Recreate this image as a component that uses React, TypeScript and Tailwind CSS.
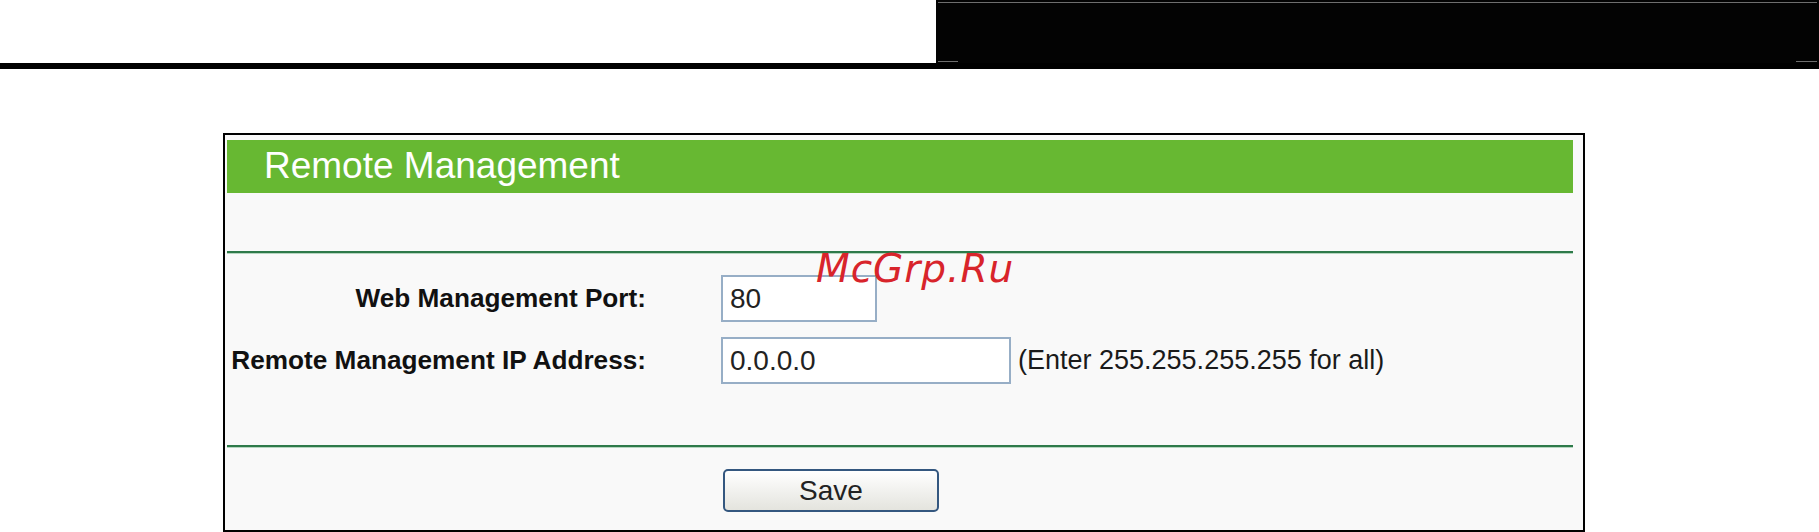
export default function App() {
  return (
    <div className="relative w-[1819px] h-[532px] overflow-hidden bg-white font-['Liberation_Sans',Arial,sans-serif] text-[#111]">
      {/* top banner */}
      <div className="flex h-[63px]">
        <div className="w-[936px]" />
        <div className="flex-1 bg-[#030303] pt-[2px] px-[2px] flex flex-col justify-between">
          <div className="h-px bg-[#6e6e6e]" />
          <div className="flex justify-between pb-[1px]">
            <div className="w-[20px] h-px bg-[#6e6e6e]" />
            <div className="w-[21px] h-px bg-[#6e6e6e]" />
          </div>
        </div>
      </div>
      <div className="h-[6px] bg-black" />

      {/* panel */}
      <div className="mt-[64px] ml-[223px] w-[1362px] h-[399px] border-2 border-black bg-[#f9f9f9] pt-[5px] pl-[2px] pr-[10px]">
        <div className="h-[53px] bg-[#67b832] flex items-center pl-[37px] pb-[3px]">
          <span className="text-[37px] leading-none text-white">Remote Management</span>
        </div>

        <div className="h-[58px]" />
        <div className="h-[3px] border-t-2 border-[#2e7a4a] bg-[#b6d6c0]" />

        <div className="pt-[21px] pb-[61px] flex flex-col gap-[15px]">
          <div className="flex items-center h-[47px]">
            <div className="w-[419px] shrink-0 flex justify-end">
              <span className="whitespace-nowrap text-[26.2px] font-bold leading-none">Web Management Port:</span>
            </div>
            <div className="ml-[75px] shrink-0 w-[156px] h-[47px] border-2 border-[#97aec6] bg-white flex items-center pl-[7px] text-[28px] text-[#222]">
              80
            </div>
          </div>
          <div className="flex items-center h-[47px]">
            <div className="w-[419px] shrink-0 flex justify-end">
              <span className="whitespace-nowrap text-[26.2px] font-bold leading-none">Remote Management IP Address:</span>
            </div>
            <div className="ml-[75px] shrink-0 w-[290px] h-[47px] border-2 border-[#97aec6] bg-white flex items-center pl-[7px] text-[28px] text-[#222]">
              0.0.0.0
            </div>
            <span className="ml-[7px] whitespace-nowrap text-[27px] text-[#1a1a1a]">(Enter 255.255.255.255 for all)</span>
          </div>
        </div>

        <div className="h-[3px] border-t-2 border-[#2e7a4a] bg-[#b6d6c0]" />

        <div className="pt-[21px] pl-[496px]">
          <button className="w-[216px] h-[43px] rounded-[5px] border-2 border-[#34577f] bg-gradient-to-b from-white to-[#e4e4de] text-[28px] text-[#222] leading-none">
            Save
          </button>
        </div>
      </div>

      {/* watermark */}
      <div className="absolute left-[816px] top-[249px] text-[39px] leading-none italic text-[#d8242b] font-['DejaVu_Sans',sans-serif] tracking-[1px]">
        McGrp.Ru
      </div>
    </div>
  );
}
